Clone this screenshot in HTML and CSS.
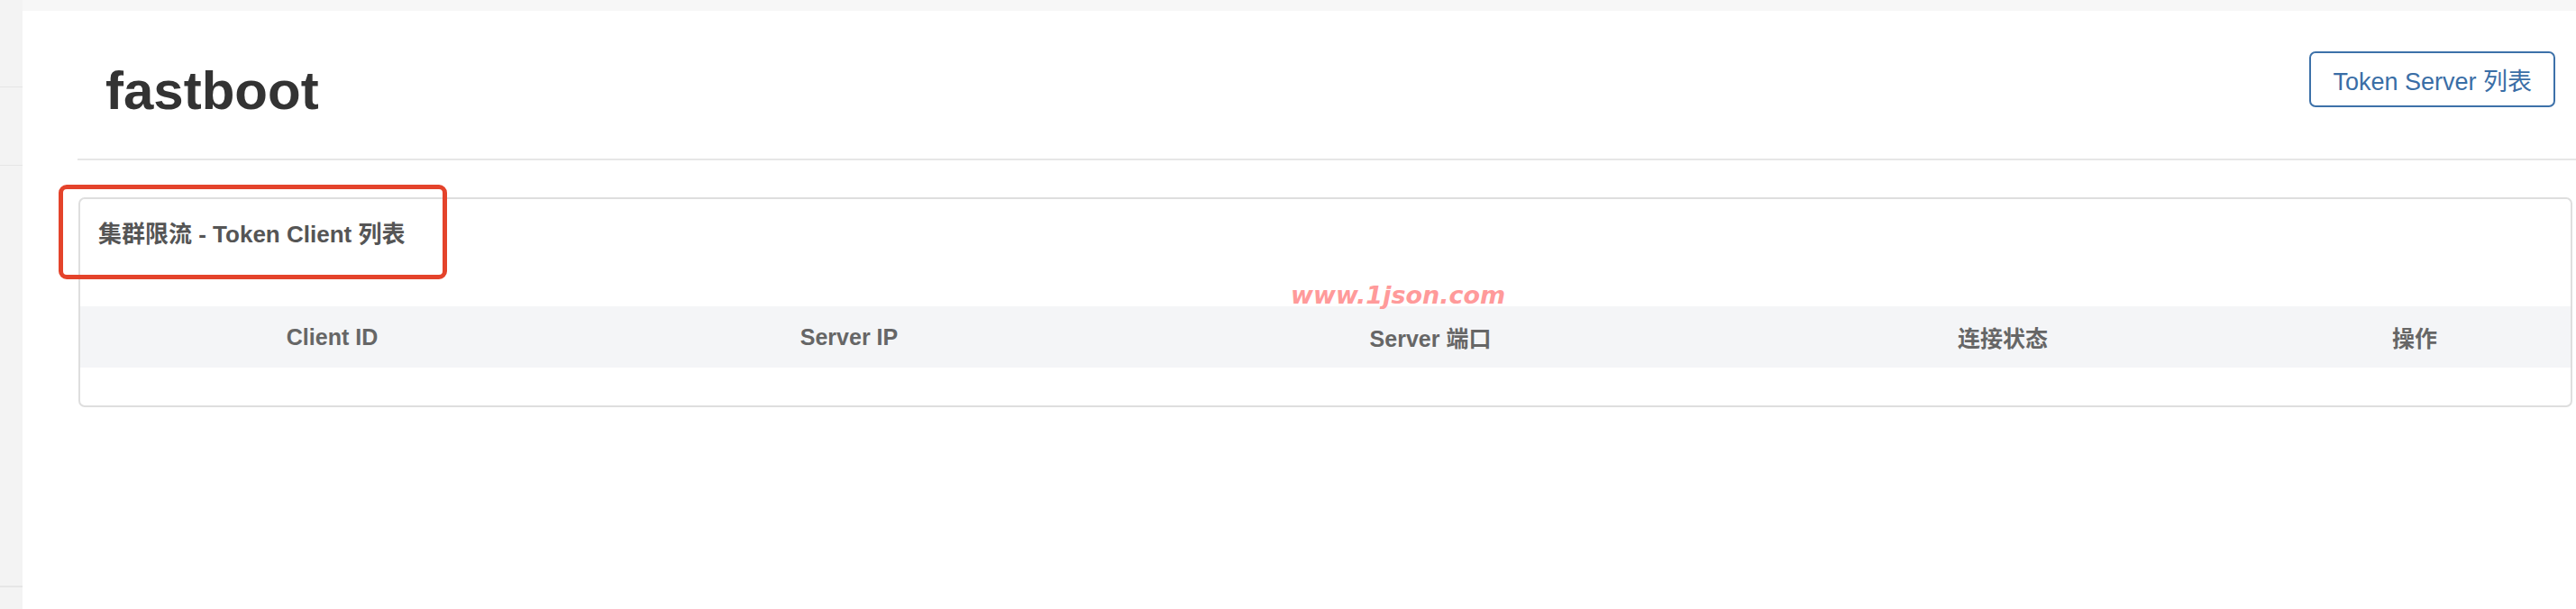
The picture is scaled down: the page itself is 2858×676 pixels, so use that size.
FILE: index.html
```html
<!DOCTYPE html>
<html lang="zh-CN">
<head>
    <meta charset="UTF-8">
    <meta name="viewport" content="width=device-width, initial-scale=1.0">
    <title>fastboot - Token Client</title>
    <link rel="stylesheet" href="styles.css">
</head>
<body>

    <div class="layout">
        <!-- Side menu (collapsed) -->
        <aside class="sidebar">
            <div class="side-item side-top"></div>
            <div class="side-item side-mid"></div>
            <div class="side-item side-long"></div>
            <div class="side-item"></div>
        </aside>

        <div class="main">
            <div class="content">
                <header class="page-header">
                    <h1>fastboot</h1>
                    <button class="server-btn">Token Server 列表</button>
                </header>

                <section class="panel">
                    <div class="panel-heading">集群限流 - Token Client 列表</div>
                    <table class="client-table">
                        <colgroup>
                            <col class="col-id">
                            <col class="col-ip">
                            <col class="col-port">
                            <col class="col-state">
                            <col>
                        </colgroup>
                        <thead>
                            <tr>
                                <th>Client ID</th>
                                <th>Server IP</th>
                                <th>Server 端口</th>
                                <th>连接状态</th>
                                <th>操作</th>
                            </tr>
                        </thead>
                        <tbody></tbody>
                    </table>
                </section>
            </div>
        </div>
    </div>

    <!-- Annotation and watermark drawn over the page -->
    <div class="highlight-box"></div>
    <div class="watermark">www.1json.com</div>

</body>
</html>
```

FILE: styles.css
```css
body {
    font-family: 'Liberation Sans', 'Noto Sans CJK SC', sans-serif;
    margin: 0;
    padding: 0;
    background: #f7f7f7;
}
.layout {
    display: flex;
    height: 676px;
}
.sidebar {
    width: 25px;
    background: #f3f3f3;
    display: flex;
    flex-direction: column;
}
.side-item {
    border-bottom: 1px solid #e6e6e6;
}
.side-top {
    height: 96px;
}
.side-mid {
    height: 86px;
}
.side-long {
    height: 466px;
}
.main {
    flex: 1;
    padding-top: 12px;
}
.content {
    background: #fff;
    height: 664px;
    padding-left: 61px;
}
.page-header {
    display: flex;
    justify-content: space-between;
    align-items: flex-start;
    padding: 45px 0 42px;
    border-bottom: 2px solid #e6e6e6;
}
.page-header h1 {
    margin: 11px 0 0 31px;
    font-size: 60px;
    line-height: 66px;
    font-weight: bold;
    color: #333;
}
.server-btn {
    height: 62px;
    padding: 0 24px;
    margin-right: 23px;
    background: #fff;
    color: #3a6ea6;
    border: 2px solid #3d71a9;
    border-radius: 7px;
    font-family: inherit;
    font-size: 27px;
    cursor: pointer;
}
.panel {
    margin: 41px 4px 0 1px;
    border: 2px solid #dedede;
    border-radius: 7px;
    padding-bottom: 42px;
}
.panel-heading {
    padding: 24px 20px 0;
    font-size: 26px;
    line-height: 30px;
    font-weight: bold;
    color: #555;
}
.client-table {
    width: 100%;
    margin-top: 65px;
    border-collapse: collapse;
    table-layout: fixed;
}
.col-id {
    width: 559px;
}
.col-ip {
    width: 588px;
}
.col-port {
    width: 702px;
}
.col-state {
    width: 568px;
}
.client-table th {
    height: 68px;
    padding: 0;
    background: #f4f5f7;
    color: #666;
    font-size: 25px;
    font-weight: bold;
    text-align: center;
}
.highlight-box {
    position: absolute;
    left: 65px;
    top: 205px;
    width: 431px;
    height: 105px;
    box-sizing: border-box;
    border: 5px solid #e4432b;
    border-radius: 9px;
}
.watermark {
    position: absolute;
    left: 1432px;
    top: 314px;
    font-family: 'DejaVu Sans', sans-serif;
    font-size: 27px;
    line-height: 27px;
    font-weight: bold;
    font-style: italic;
    color: #ff9a9a;
}
```
